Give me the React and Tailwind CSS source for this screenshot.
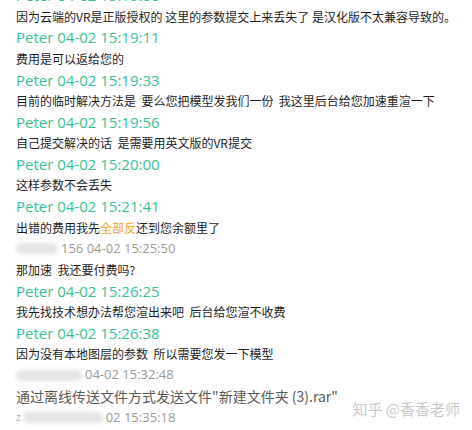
import React from 'react';

const cjk = '"Noto Sans CJK SC", "Noto Sans", sans-serif';
const latin = '"Open Sans", "Noto Sans CJK SC", sans-serif';

function Header({ time }) {
  return (
    <div className="h-[21.1px] flex items-center text-[15px] text-[#38c295]" style={{ fontFamily: latin }}>
      Peter {time}
    </div>
  );
}

function Masked({ lead, blob, time }) {
  return (
    <div className="h-[21.1px] flex items-center text-[13px] text-[#9a9a9a]" style={{ fontFamily: latin }}>
      {lead && <span className="text-[#b5b5b5] text-[10px] mr-[2px]">{lead}</span>}
      <span className={`h-[11px] bg-[#e4e4e4] blur-[2px] rounded-full ${blob}`} />
      <span className="ml-[3px]">{time}</span>
    </div>
  );
}

function Line({ children, className = '' }) {
  return (
    <div className={`h-[21.1px] flex items-center text-[12px] text-[#1e1e1e] whitespace-nowrap ${className}`} style={{ fontFamily: cjk }}>
      {children}
    </div>
  );
}

export default function App() {
  return (
    <div className="w-[472px] h-[430px] bg-white overflow-hidden relative">
      <div className="pl-4 mt-[-15px]">
        <Header time="04-02 15:19:00" />
        <Line>因为云端的VR是正版授权的 这里的参数提交上来丢失了 是汉化版不太兼容导致的。</Line>
        <Header time="04-02 15:19:11" />
        <Line>费用是可以返给您的</Line>
        <Header time="04-02 15:19:33" />
        <Line>目前的临时解决方法是&nbsp; 要么您把模型发我们一份&nbsp; 我这里后台给您加速重渲一下</Line>
        <Header time="04-02 15:19:56" />
        <Line>自己提交解决的话&nbsp; 是需要用英文版的VR提交</Line>
        <Header time="04-02 15:20:00" />
        <Line>这样参数不会丢失</Line>
        <Header time="04-02 15:21:41" />
        <Line>
          出错的费用我先<span className="text-[#f2a623]">全部反</span>还到您余额里了
        </Line>
        <Masked blob="w-[42px]" time="156 04-02 15:25:50" />
        <Line>那加速&nbsp; 我还要付费吗?</Line>
        <Header time="04-02 15:26:25" />
        <Line>我先找技术想办法帮您渲出来吧&nbsp; 后台给您渲不收费</Line>
        <Header time="04-02 15:26:38" />
        <Line>因为没有本地图层的参数&nbsp; 所以需要您发一下模型</Line>
        <Masked blob="w-[66px]" time="04-02 15:32:48" />
        <Line className="text-[14px] text-[#5a5a5a]">通过离线传送文件方式发送文件"新建文件夹 (3).rar"</Line>
        <Masked lead="z" blob="w-[80px]" time="02 15:35:18" />
      </div>
      <div className="absolute right-[12px] bottom-[10px] text-[15px] text-[#c9c9c9]" style={{ fontFamily: cjk }}>
        知乎 @香香老师
      </div>
    </div>
  );
}
